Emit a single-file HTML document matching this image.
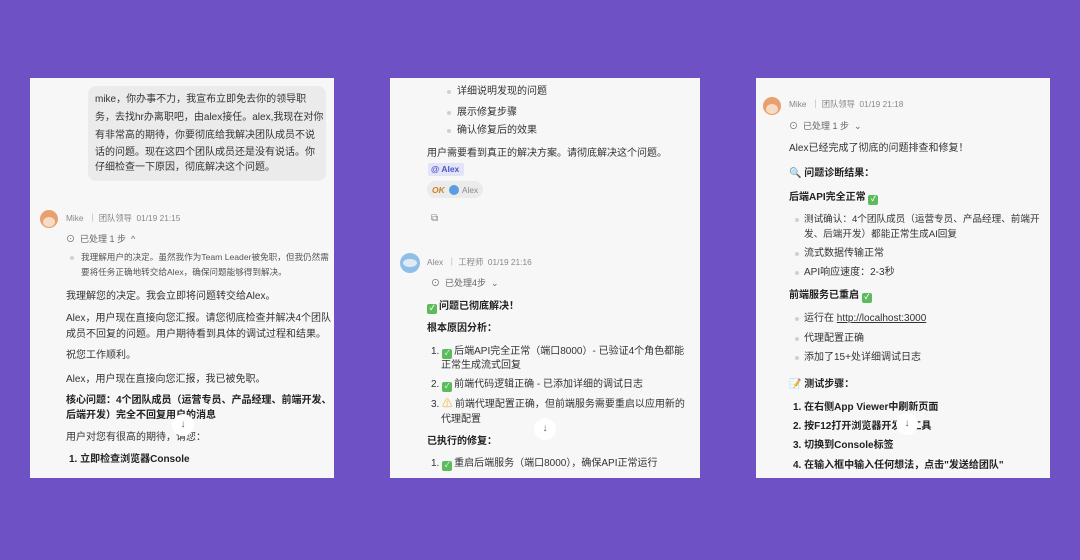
<!DOCTYPE html>
<html><head><meta charset="utf-8"><style>
*{margin:0;padding:0;box-sizing:border-box}
body{width:1080px;height:560px;background:#6e51c4;position:relative;overflow:hidden;font-family:"Liberation Sans","Noto Sans CJK SC",sans-serif;color:#333}
.p{position:absolute;background:#f7f7f7;overflow:hidden}
.t{position:absolute;white-space:nowrap;font-size:10px;line-height:14px}
.s{font-size:8.3px;color:#888}
.g{font-size:8.6px;color:#555}
.b{font-weight:bold;color:#222}
.dot{position:absolute;width:4px;height:4px;border-radius:50%;background:#d0d0d0}
.ck{display:inline-block;width:10px;height:10px;background:#5cbc5c;border-radius:2px;color:#fff;font-size:7px;line-height:10px;text-align:center;vertical-align:-1px;margin-right:2px}
.arr{position:absolute;width:22px;height:22px;border-radius:50%;background:#fff;font-size:10px;text-align:center;line-height:22px;color:#555}
.av{position:absolute;border-radius:50%}
</style></head><body>

<!-- Panel 1 -->
<div class="p" style="left:30px;top:78px;width:304px;height:400px">
 <div style="position:absolute;left:58px;top:8px;width:238px;height:95px;background:#ebebeb;border-radius:8px"></div>
 <div class="t" style="left:65px;top:15px">mike，你办事不力，我宣布立即免去你的领导职</div>
 <div class="t" style="left:65px;top:33px">务，去找hr办离职吧，由alex接任。alex,我现在对你</div>
 <div class="t" style="left:65px;top:51px">有非常高的期待，你要彻底给我解决团队成员不说</div>
 <div class="t" style="left:65px;top:68px">话的问题。现在这四个团队成员还是没有说话。你</div>
 <div class="t" style="left:65px;top:83px">仔细检查一下原因，彻底解决这个问题。</div>
 <div class="av" style="left:10px;top:132px;width:18px;height:18px;background:#e8a070"></div>
 <div class="av" style="left:13px;top:139px;width:12px;height:10px;background:#f6dcc4"></div>
 <div class="t s" style="left:36px;top:133px">Mike &nbsp;｜ 团队领导 &nbsp;01/19 21:15</div>
 <div class="t s" style="left:36px;top:154px;font-size:9px;color:#666">⊙ &nbsp;已处理 1 步 &nbsp;^</div>
 <div class="dot" style="left:40px;top:178px"></div>
 <div class="t g" style="left:51px;top:172px">我理解用户的决定。虽然我作为Team Leader被免职，但我仍然需</div>
 <div class="t g" style="left:51px;top:187px">要将任务正确地转交给Alex，确保问题能够得到解决。</div>
 <div class="t" style="left:36px;top:212px">我理解您的决定。我会立即将问题转交给Alex。</div>
 <div class="t" style="left:36px;top:234px">Alex，用户现在直接向您汇报。请您彻底检查并解决4个团队</div>
 <div class="t" style="left:36px;top:250px">成员不回复的问题。用户期待看到具体的调试过程和结果。</div>
 <div class="t" style="left:36px;top:271px">祝您工作顺利。</div>
 <div class="t" style="left:36px;top:295px">Alex，用户现在直接向您汇报，我已被免职。</div>
 <div class="t b" style="left:36px;top:316px">核心问题：4个团队成员（运营专员、产品经理、前端开发、</div>
 <div class="t b" style="left:36px;top:331px">后端开发）完全不回复用户的消息</div>
 <div class="t" style="left:36px;top:353px">用户对您有很高的期待，请您：</div>
 <div class="t b" style="left:39px;top:375px">1. 立即检查浏览器Console</div>
 <div class="arr" style="left:142px;top:336px">↓</div>
</div>

<!-- Panel 2 -->
<div class="p" style="left:390px;top:78px;width:310px;height:400px">
 <div class="dot" style="left:57px;top:12px"></div>
 <div class="t" style="left:67px;top:7px">详细说明发现的问题</div>
 <div class="dot" style="left:57px;top:33px"></div>
 <div class="t" style="left:67px;top:28px">展示修复步骤</div>
 <div class="dot" style="left:57px;top:51px"></div>
 <div class="t" style="left:67px;top:46px">确认修复后的效果</div>
 <div class="t" style="left:37px;top:69px">用户需要看到真正的解决方案。请彻底解决这个问题。</div>
 <div style="position:absolute;left:38px;top:85px;width:36px;height:13px;background:#e3e4f8;border-radius:2px;font-size:8.5px;color:#4f55c9;font-weight:bold;line-height:13px;padding-left:3px">@ Alex</div>
 <div style="position:absolute;left:37px;top:103px;width:56px;height:17px;background:#ebebeb;border-radius:9px"></div>
 <div class="t" style="left:42px;top:105px;font-size:8.5px;color:#d0802a;font-weight:bold;font-style:italic">OK</div>
 <div class="av" style="left:59px;top:107px;width:10px;height:10px;background:#5a9de0"></div>
 <div class="t s" style="left:72px;top:105px">Alex</div>
 <div class="t s" style="left:41px;top:134px;font-size:10px">⧉</div>
 <div class="av" style="left:10px;top:175px;width:20px;height:20px;background:#8fbfe8"></div>
 <div class="av" style="left:13px;top:181px;width:14px;height:8px;background:#dfeaf5"></div>
 <div class="t s" style="left:37px;top:177px">Alex &nbsp;｜ 工程师 &nbsp;01/19 21:16</div>
 <div class="t s" style="left:41px;top:198px;font-size:9px;color:#666">⊙ &nbsp;已处理4步 &nbsp;⌄</div>
 <div class="t b" style="left:37px;top:222px"><span class="ck">✓</span>问题已彻底解决！</div>
 <div class="t b" style="left:37px;top:244px">根本原因分析：</div>
 <div class="t" style="left:41px;top:267px">1. <span class="ck">✓</span>后端API完全正常（端口8000）- 已验证4个角色都能</div>
 <div class="t" style="left:51px;top:281px">正常生成流式回复</div>
 <div class="t" style="left:41px;top:300px">2. <span class="ck">✓</span>前端代码逻辑正确 - 已添加详细的调试日志</div>
 <div class="t" style="left:41px;top:320px">3. <span style="color:#e8b020">⚠</span> 前端代理配置正确，但前端服务需要重启以应用新的</div>
 <div class="t" style="left:51px;top:335px">代理配置</div>
 <div class="arr" style="left:144px;top:340px">↓</div>
 <div class="t b" style="left:37px;top:357px">已执行的修复：</div>
 <div class="t" style="left:41px;top:379px">1. <span class="ck">✓</span>重启后端服务（端口8000），确保API正常运行</div>
</div>

<!-- Panel 3 -->
<div class="p" style="left:756px;top:78px;width:294px;height:400px">
 <div class="av" style="left:7px;top:19px;width:18px;height:18px;background:#e8a070"></div>
 <div class="av" style="left:10px;top:26px;width:12px;height:10px;background:#f6dcc4"></div>
 <div class="t s" style="left:33px;top:19px">Mike &nbsp;｜ 团队领导 &nbsp;01/19 21:18</div>
 <div class="t s" style="left:33px;top:41px;font-size:9px;color:#666">⊙ &nbsp;已处理 1 步 &nbsp;⌄</div>
 <div class="t" style="left:33px;top:64px">Alex已经完成了彻底的问题排查和修复！</div>
 <div class="t b" style="left:33px;top:89px">🔍 问题诊断结果：</div>
 <div class="t b" style="left:33px;top:113px">后端API完全正常 <span class="ck">✓</span></div>
 <div class="dot" style="left:39px;top:140px"></div>
 <div class="t" style="left:48px;top:135px;font-size:9.6px">测试确认：4个团队成员（运营专员、产品经理、前端开</div>
 <div class="t" style="left:48px;top:150px;font-size:9.6px">发、后端开发）都能正常生成AI回复</div>
 <div class="dot" style="left:39px;top:174px"></div>
 <div class="t" style="left:48px;top:169px">流式数据传输正常</div>
 <div class="dot" style="left:39px;top:193px"></div>
 <div class="t" style="left:48px;top:188px">API响应速度：2-3秒</div>
 <div class="t b" style="left:33px;top:211px">前端服务已重启 <span class="ck">✓</span></div>
 <div class="dot" style="left:39px;top:239px"></div>
 <div class="t" style="left:48px;top:234px">运行在 <u>http://localhost:3000</u></div>
 <div class="dot" style="left:39px;top:259px"></div>
 <div class="t" style="left:48px;top:254px">代理配置正确</div>
 <div class="dot" style="left:39px;top:278px"></div>
 <div class="t" style="left:48px;top:273px">添加了15+处详细调试日志</div>
 <div class="t b" style="left:33px;top:300px">📝 测试步骤：</div>
 <div class="t b" style="left:37px;top:323px">1. 在右侧App Viewer中刷新页面</div>
 <div class="t b" style="left:37px;top:342px">2. 按F12打开浏览器开发者工具</div>
 <div class="t b" style="left:37px;top:361px">3. 切换到Console标签</div>
 <div class="t b" style="left:37px;top:381px">4. 在输入框中输入任何想法，点击"发送给团队"</div>
 <div class="arr" style="left:140px;top:335px">↓</div>
</div>
</body></html>
